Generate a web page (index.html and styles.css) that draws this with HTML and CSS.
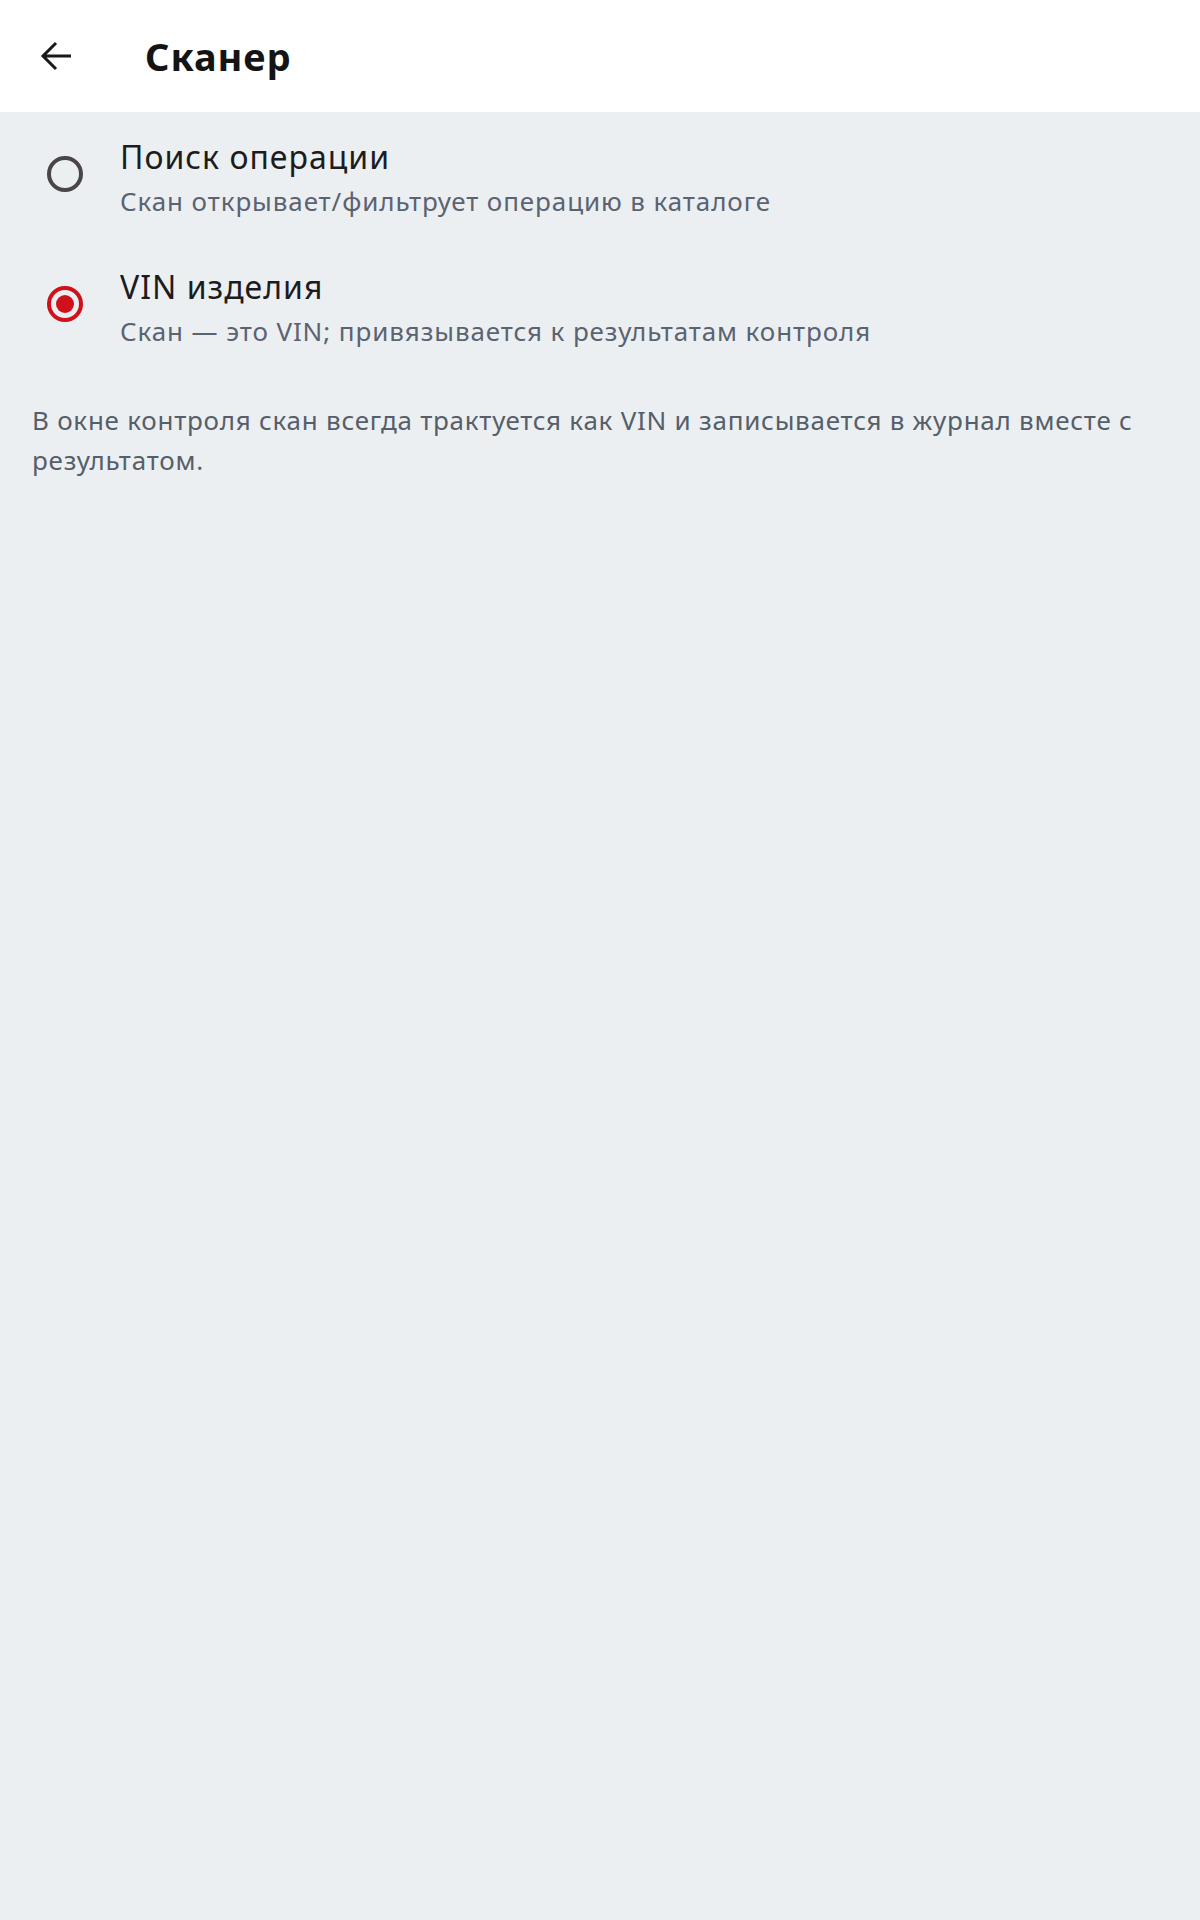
FILE: index.html
```html
<!DOCTYPE html>
<html lang="ru">
<head>
<meta charset="utf-8">
<title>Сканер</title>
<link rel="stylesheet" href="styles.css">
</head>
<body>
  <header class="app-bar">
    <button class="back-btn" type="button" aria-label="Назад">
      <svg viewBox="0 0 32 32" width="32" height="32" aria-hidden="true">
        <path d="M31 16H3.5M16 3L3 16l13 13" fill="none" stroke="#1a1a1a" stroke-width="3" stroke-linecap="butt" stroke-linejoin="miter"/>
      </svg>
    </button>
    <h1 class="app-title">Сканер</h1>
  </header>

  <main class="content">
    <ul class="options">
      <li class="option">
        <span class="radio"></span>
        <div class="option-text">
          <div class="option-title">Поиск операции</div>
          <div class="option-sub">Скан открывает/фильтрует операцию в каталоге</div>
        </div>
      </li>
      <li class="option">
        <span class="radio radio--checked"></span>
        <div class="option-text">
          <div class="option-title">VIN изделия</div>
          <div class="option-sub">Скан — это VIN; привязывается к результатам контроля</div>
        </div>
      </li>
    </ul>
    <p class="note">В окне контроля скан всегда трактуется как VIN и записывается в журнал вместе с результатом.</p>
  </main>
</body>
</html>
```
FILE: styles.css
```css
* {
  box-sizing: border-box;
}

html, body {
  margin: 0;
  padding: 0;
}

body {
  min-height: 1920px;
  background: #eceff2;
  font-family: "Noto Sans", "Open Sans", sans-serif;
  color: #1c1c1e;
}

/* top bar */
.app-bar {
  height: 112px;
  background: #ffffff;
  display: flex;
  align-items: center;
  padding-left: 40px;
}

.back-btn {
  width: 32px;
  height: 32px;
  padding: 0;
  border: 0;
  background: none;
  display: flex;
}

.app-title {
  margin: 0 0 0 73px;
  font-size: 38px;
  font-weight: 700;
  letter-spacing: 0.9px;
  line-height: 112px;
  color: #141414;
}

/* option list */
.options {
  list-style: none;
  margin: 0;
  padding: 0;
}

.option {
  display: flex;
  align-items: flex-start;
  padding: 23px 0 23px 47px;
}

.radio {
  flex: none;
  width: 36px;
  height: 36px;
  margin-top: 21px;
  border-radius: 50%;
  border: 4.5px solid #4a4546;
  display: flex;
  align-items: center;
  justify-content: center;
}

.radio--checked {
  border-color: #d0111c;
}

.radio--checked::after {
  content: "";
  width: 18px;
  height: 18px;
  border-radius: 50%;
  background: #d0111c;
}

.option-text {
  margin-left: 37px;
  display: flex;
  flex-direction: column;
  gap: 8px;
}

.option-title {
  font-size: 32px;
  line-height: 40px;
  letter-spacing: 1px;
  color: #1c1c1e;
  padding-top: 2px;
  margin-bottom: -2px;
}

.option-sub {
  font-size: 26px;
  line-height: 36px;
  letter-spacing: 0.9px;
  color: #5b6370;
}

.note {
  margin: 28px 0 0;
  padding: 0 40px 0 32px;
  font-size: 26px;
  line-height: 40px;
  letter-spacing: 0.75px;
  color: #565e69;
}
```
